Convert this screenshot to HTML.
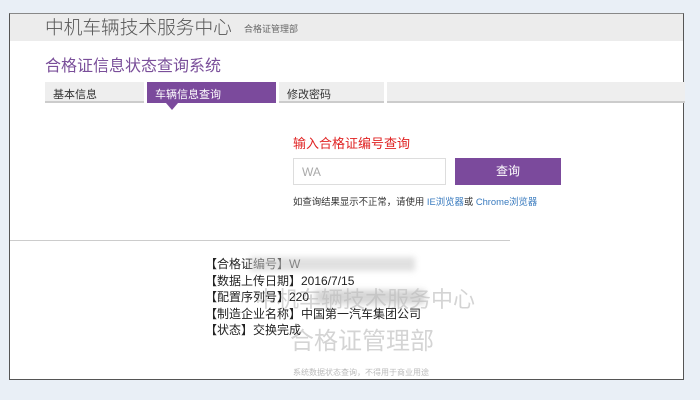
<!DOCTYPE html>
<html><head><meta charset="utf-8"><style>
*{margin:0;padding:0;box-sizing:border-box}
body{width:700px;height:400px;background:#e9eff6;position:relative;overflow:hidden;font-family:"Liberation Sans","Noto Sans CJK SC",sans-serif}
.frame{position:absolute;left:9px;top:13px;width:675px;height:367px;background:#fff;border:1px solid #555;border-top:1px solid #888}
.hdr{position:absolute;left:0;top:0;width:100%;height:27px;background:#ececec}
.a{position:absolute;white-space:nowrap}
</style></head><body>
<div class="frame">
<div class="hdr"></div>
<div class="a" style="left:35px;top:-1px;font-size:18.7px;color:#555;font-weight:300">中机车辆技术服务中心</div>
<div class="a" style="left:234px;top:8px;font-size:9px;color:#666">合格证管理部</div>
<div class="a" style="left:35px;top:38px;font-size:16px;color:#7a4f9a">合格证信息状态查询系统</div>
<div class="a" style="left:35px;top:68px;width:99px;height:21px;background:#eee;border-bottom:2px solid #ccc;font-size:11px;color:#333;padding:4px 0 0 8px">基本信息</div>
<div class="a" style="left:137px;top:68px;width:129px;height:21px;background:#7b4a9c;font-size:11px;color:#fff;padding:4px 0 0 8px">车辆信息查询</div>
<div class="a" style="left:156px;top:89px;width:0;height:0;border-left:6px solid transparent;border-right:6px solid transparent;border-top:7px solid #7b4a9c"></div>
<div class="a" style="left:269px;top:68px;width:105px;height:21px;background:#eee;border-bottom:2px solid #ccc;font-size:11px;color:#333;padding:4px 0 0 8px">修改密码</div>
<div class="a" style="left:377px;top:68px;width:298px;height:21px;background:#eee;border-bottom:2px solid #ccc"></div>
<div class="a" style="left:283px;top:119px;font-size:13px;color:#e02424">输入合格证编号查询</div>
<div class="a" style="left:283px;top:144px;width:153px;height:27px;border:1px solid #ddd;font-size:12px;color:#aaa;padding:6px 0 0 8px">WA</div>
<div class="a" style="left:445px;top:144px;width:106px;height:27px;background:#7b4a9c;color:#fff;font-size:12px;text-align:center;line-height:27px">查询</div>
<div class="a" style="left:283px;top:180px;font-size:9.4px;color:#333">如查询结果显示不正常，请使用 <span style="color:#3a7bbf">IE浏览器</span>或 <span style="color:#3a7bbf">Chrome浏览器</span></div>
<div class="a" style="left:0;top:226px;width:500px;height:1px;background:#ccc"></div>
<div class="a" style="left:245px;top:268px;font-size:22px;color:#d4d4d4">中机车辆技术服务中心</div>
<div class="a" style="left:280px;top:307px;font-size:24px;color:#d4d4d4">合格证管理部</div>
<div class="a" style="left:195px;top:242px;font-size:12px;line-height:16.5px;color:#222">【合格证编号】W<br>【数据上传日期】2016/7/15<br>【配置序列号】220<br>【制造企业名称】中国第一汽车集团公司<br>【状态】交换完成</div>
<div class="a" style="left:240px;top:243px;width:165px;height:14px;background:#ccc;opacity:.6;filter:blur(3px)"></div>
<div class="a" style="left:305px;top:276px;width:110px;height:14px;background:#bbb;opacity:.6;filter:blur(3px)"></div>
<div class="a" style="left:283px;top:353px;font-size:8px;color:#bbb">系统数据状态查询，不得用于商业用途</div>
</div>
</body></html>
